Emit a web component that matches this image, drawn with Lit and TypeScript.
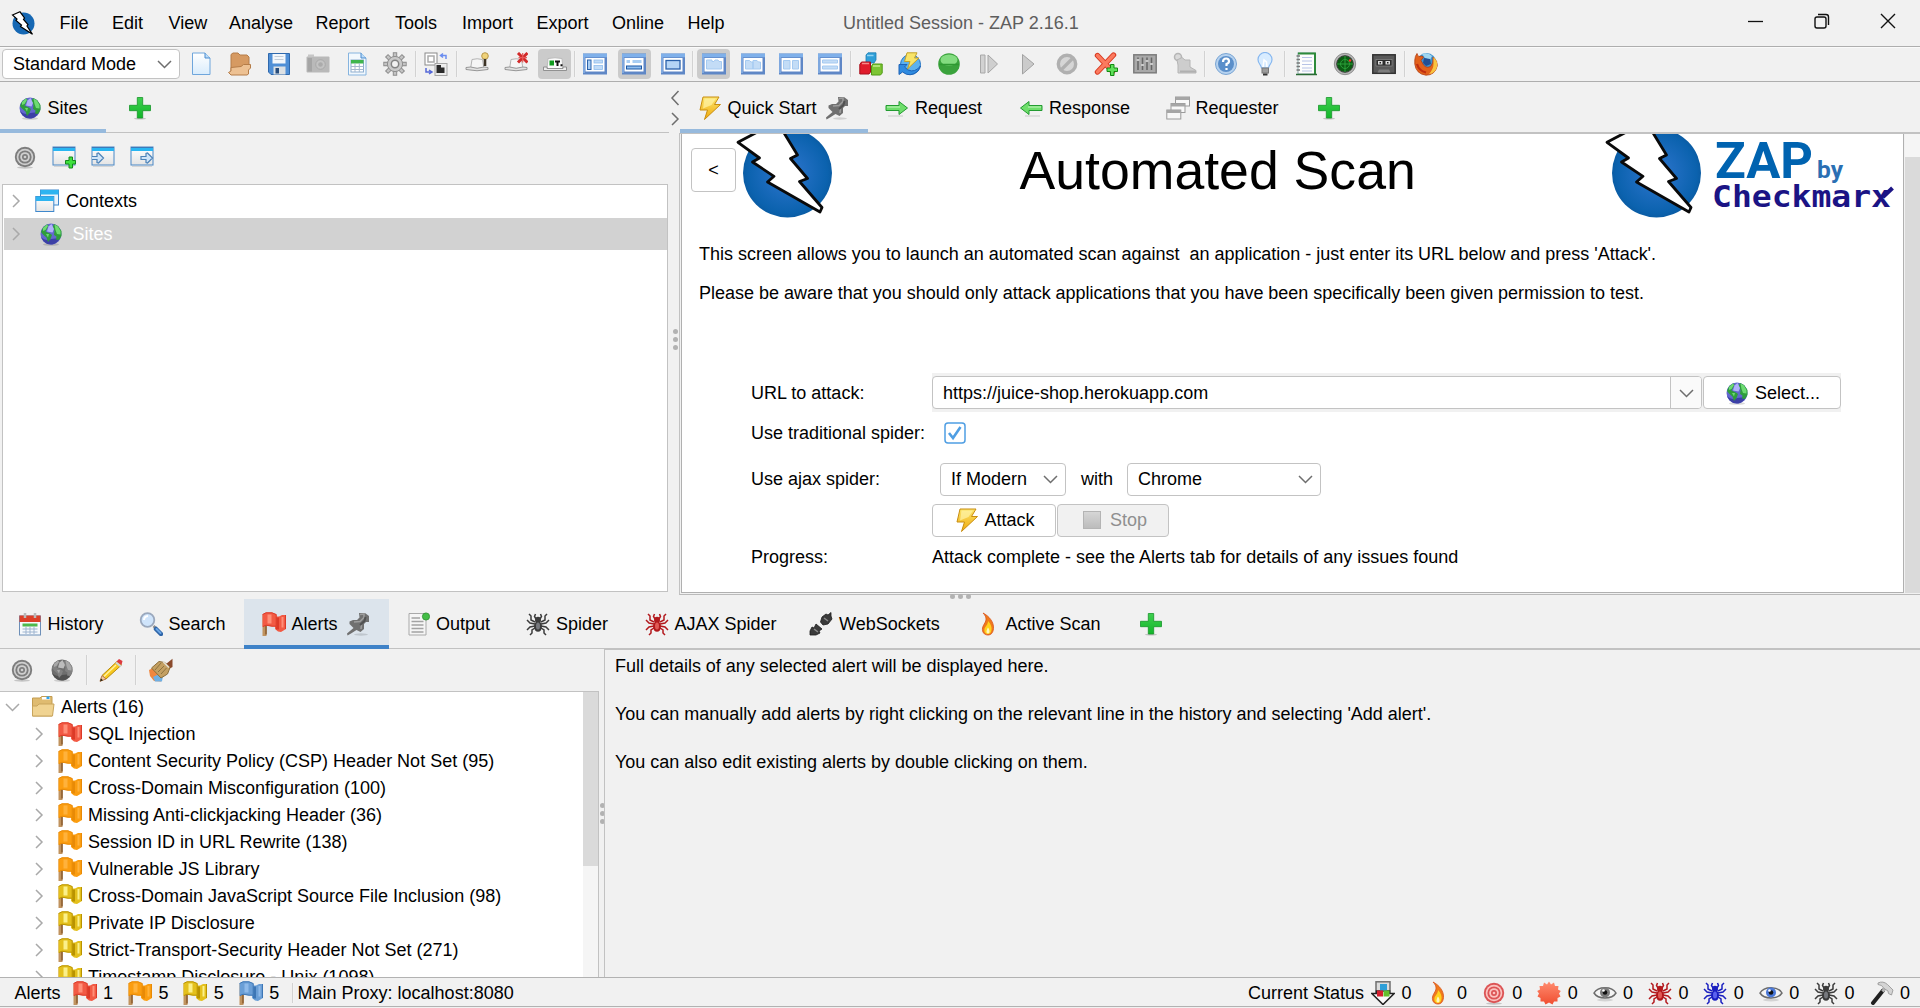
import { LitElement, html, svg, css, nothing } from "lit";
import { customElement } from "lit/decorators.js";
import { classMap } from "lit/directives/class-map.js";
import { styleMap } from "lit/directives/style-map.js";

/* ---------- icon drawings, all on a 24 x 24 grid ---------- */

const spiderIcon = (c: string, body: string) => svg`
  <g fill="none" stroke=${c} stroke-width="1.5">
    <path d="M9 10L5 8V4L3 2M9 12L4 11L1 8M9 14L4 15L1 18M9 16L6 18V21L4 23"/>
    <path d="M15 10L19 8V4L21 2M15 12L20 11L23 8M15 14L20 15L23 18M15 16L18 18V21L20 23"/>
    <path d="M10 7L8.5 4.5L9.5 2M14 7L15.5 4.5L14.500 2"/>
  </g>
  <ellipse cx="12" cy="8" rx="3" ry="3.200" fill=${c}/>
  <ellipse cx="12" cy="14.500" rx="4" ry="5.200" fill=${c}/>
  <ellipse cx="12" cy="14" rx="2" ry="3.500" fill=${body}/>`;

const flagIcon = (edge: string, fill: string, light: string) => svg`
  <path d="M.5 3H4.500V24H.5Z" fill="#c0935f"/><path d="M4 13V22.500" stroke="#8a5a2b" stroke-width="1.500"/>
  <path d="M13 4.500H17L20 3H24V17L21.500 18.500L19 20L16 19.500L13 17Z" fill=${fill}/>
  <path d="M15.500 5.500V17.500" stroke=${edge} stroke-width="3"/><path d="M20.500 5V15.500" stroke=${light} stroke-width="2"/><path d="M23.500 3V17" stroke=${edge}/>
  <path d="M.5 2.500L4 .5H10L14.500 2.500V14.500H10L4 13.500L.5 15Z" fill=${fill}/>
  <path d="M.5 2.500L4 .8H10L14.200 2.500V14.200" fill="none" stroke=${edge}/><path d="M1 14.500L4 13.200L10 14.200H14" fill="none" stroke=${edge}/>
  <path d="M7.500 2.500V11.500" stroke=${light} stroke-width="4"/>`;

const globeIcon = (sea: string, deep: string, land: string, light: string, pale: string) => svg`
  <ellipse cx="12" cy="22.500" rx="8" ry="1.300" fill="#000" opacity=".15"/>
  <circle cx="12" cy="12" r="10.500" fill=${sea}/>
  <path d="M2 15C5 18 9 19 12 17L21 16C19 20 16 22.500 12 22.500C7 22.500 3.500 19 2 15Z" fill=${deep}/>
  <path d="M15 2L19 4L22.500 9V14L20 18L17 17.500L17.500 14.500L15 13L15.500 9L13.500 5Z" fill=${land}/>
  <path d="M15.500 2.500L19 4.500L21.500 9V12.500L18 12L16.500 8Z" fill=${pale}/>
  <path d="M2 10L4 5.500L8 2.500L9.500 3L8 7L6.500 9.500L11 11.500L13 13L11.500 17L9 20L7.500 15.500L4 12.500Z" fill=${land}/>
  <path d="M4 6L8 2.500L9 4L6.500 8L4 9Z" fill=${pale}/>
  <path d="M9.500 4.500L12.500 2L15 7L13.500 10.500L8 9.500Z" fill=${light}/>
  <path d="M7 12L10 12L9 15.500Z" fill=${pale}/>`;

const targetIcon = (c: string, l: string) => svg`
  <ellipse cx="12" cy="22.500" rx="8" ry="1.200" fill="#000" opacity=".18"/>
  <circle cx="12" cy="12" r="10.200" fill=${c}/>
  <circle cx="12" cy="12" r="8.300" fill=${l}/>
  <circle cx="12" cy="12" r="6.600" fill=${c}/>
  <circle cx="12" cy="12" r="4.800" fill=${l}/>
  <circle cx="12" cy="12" r="3" fill=${c}/><circle cx="12" cy="12" r="1.300" fill=${l}/>`;

const eyeIcon = (iris: string) => svg`
  <ellipse cx="12" cy="19" rx="8" ry="1.500" fill="#000" opacity=".12"/>
  <path d="M1 12C5 5 19 5 23 12C19 18.500 5 18.500 1 12Z" fill="#f4f4f4" stroke="#6c6c6c" stroke-width="1.500"/>
  <circle cx="12" cy="11.500" r="5" fill=${iris}/><circle cx="12" cy="11.500" r="2.300" fill="#111"/>
  <circle cx="10.500" cy="9.500" r="1.300" fill="#fff"/>`;

const layoutFrame = svg`<rect x="0" y="1.500" width="24.500" height="21" fill="#5f87c6"/>
  <path d="M0 3.500H24" stroke="#7fb0ea" stroke-width="3.500"/><path d="M1 5V21" stroke="#88b2e6" stroke-width="1.500"/><rect x="2.500" y="6" width="19" height="13.500" fill="#fff"/>`;

const hatBase = svg`<path d="M5.500 17L7 7.500Q12 6 17.500 7.500L19 17Z" fill="#f6f6f6" stroke="#b4b4b4"/>
  <path d="M1 15.500L5.500 15Q12 17.500 19 15L23 15.500V17.500Q12 20 1 17.500Z" fill="#e2e2e2" stroke="#8d8d8d" stroke-width=".9"/>`;

const smallWindow = svg`<rect x="1" y="2" width="22" height="18" fill="url(#paper)" stroke="#4a88c6"/>
  <rect x="1" y="2" width="22" height="4" fill="#29b6f2"/><path d="M1 2.500H23" stroke="#3f79b8"/>
  <path d="M2 21.500H22" stroke="#d5d5d5"/>`;

const icons: Record<string, unknown> = {
  zap: svg`<circle cx="12.500" cy="12.500" r="11" fill="#1668b4"/>
    <path d="M1.500 4L9 .8L13.500 7L12.500 8.500L17 13.500L16 15L21.500 23.300L9.500 15.500L10.500 14L5 9.500L6 8Z" fill="#fff" stroke="#000" stroke-width="1.200"/>`,
  doc: svg`<path d="M3.500 1H16L21 6V22.500H3.500Z" fill="url(#bluePaper)" stroke="#6fa6dc"/><path d="M16 1V6H21" fill="#bcdcf8" stroke="#4b8bce"/>`,
  open: svg`<path d="M3 19V2.500L5 1H10L12 3H19L21 5V15L19 20H4Z" fill="#d69a62" stroke="#b57c48"/>
    <path d="M.5 20.500L3 19V15.500L13 14.500L15.500 12.500H22.500V16L20.500 18V22L19 23H3Z" fill="#edc193" stroke="#b57c48"/>`,
  save: svg`<path d="M1.500 1.500H22.500V22.500H4L1.500 20Z" fill="#4f8fd6" stroke="#2f69ad"/><rect x="5.500" y="2" width="13" height="9.500" fill="#f3f7fb"/>
    <path d="M7.500 4.500H16.500M7.500 7.500H16.500" stroke="#c2cdd8"/><rect x="6.500" y="14.500" width="12" height="8" fill="#dde1e4"/><rect x="8.500" y="16" width="3.500" height="5.500" fill="#274d7d"/>`,
  camera: svg`<rect x="0.500" y="4.500" width="23" height="16" rx="1" fill="#b9b9b9"/><rect x="2" y="2.500" width="6" height="2.500" fill="#c6c6c6"/>
    <rect x="1.500" y="6" width="4.500" height="13.500" fill="#a5a5a5"/><circle cx="14.500" cy="12.500" r="4.800" fill="#c3c3c3" stroke="#a9a9a9"/><circle cx="14.500" cy="12.500" r="2.300" fill="#ababab"/>`,
  report: svg`<path d="M3.500 1H16L21 6V23H3.500Z" fill="#f2f8fd" stroke="#86b4df"/><path d="M16 1V6H21" fill="#bcdcf8" stroke="#4b8bce"/>
    <rect x="6" y="8" width="12.500" height="12" fill="#fff" stroke="#8eaed0"/><rect x="6" y="8" width="12.500" height="3.500" fill="#3fb54d"/>
    <path d="M6 14.500H18.500M6 17.500H18.500M10 11V20M14.300 11V20" stroke="#a6b9cf"/>`,
  gear: svg`<g stroke="#8b8b8b" stroke-width="4.400"><path d="M12 .3V23.700M.3 12H23.700M3.500 3.500L20.500 20.500M20.500 3.500L3.500 20.500"/></g>
    <g stroke="#c4c4c4" stroke-width="2.600"><path d="M12 1.200V22.800M1.200 12H22.800M4.200 4.200L19.800 19.800M19.800 4.200L4.200 19.800"/></g>
    <circle cx="12" cy="12" r="7.600" fill="#c9c9c9" stroke="#8f8f8f"/><circle cx="12" cy="12" r="3.700" fill="#f1f1f1" stroke="#838383" stroke-width="1.500"/>`,
  swap: svg`<rect x="1" y="1" width="12" height="12" fill="#fff" stroke="#8a8a8a"/><rect x="4" y="4" width="6" height="6" fill="none" stroke="#aaa" stroke-width="1.500"/>
    <rect x="11" y="11.500" width="12" height="12" fill="#ececec" stroke="#a5a5a5"/><path d="M12.500 13H17V15.500H20.500V21H12.500Z" fill="#2a2a2a"/>
    <path d="M22 7V3.500H17.500M19 1.500L16.500 3.500L19 5.500" fill="none" stroke="#6b8df0" stroke-width="1.500"/>
    <path d="M2 16V20H7M5 18L8 20L5 22" fill="none" stroke="#5568d8" stroke-width="1.500"/>`,
  hatKey: svg`${hatBase}<circle cx="20" cy="4" r="3.300" fill="#efd27a" stroke="#b8974a"/><path d="M20 7V14" stroke="#3c3325" stroke-width="2.600"/>`,
  hatX: svg`${hatBase}<path d="M14 1L23.500 10.500M23.500 1L14 10.500" stroke="#d22a2a" stroke-width="3"/><path d="M18.700 1V10.500M14.500 5.700H23" stroke="#e65a5a" stroke-width="1.200"/>`,
  hatOn: svg`<path d="M4 17L5 6.500Q12 5 19 6.500L20 17Z" fill="#fafafa" stroke="#bbb"/>
    <path d="M.5 15H4V16.500H20V15H23.500V18.500H.5Z" fill="#eee" stroke="#888" stroke-width=".9"/>
    <rect x="6.500" y="8.500" width="4.500" height="5" fill="#0e9a1d"/><path d="M12 9.500H17M14.500 10V14M17.500 13.300H19.500" stroke="#111" stroke-width="2"/>`,
  lay1: svg`${layoutFrame}<rect x="4.500" y="8" width="3.500" height="9.500" fill="#a8cdf3" stroke="#2b62ab"/><rect x="11" y="8" width="8.500" height="3" fill="#c0dbf7" stroke="#8fbcec" stroke-width=".8"/><rect x="11" y="13.500" width="8.500" height="4" fill="#c0dbf7" stroke="#8fbcec" stroke-width=".8"/>`,
  lay2: svg`${layoutFrame}<rect x="4.500" y="8" width="3.500" height="3" fill="#a8cdf3"/><rect x="10.500" y="8" width="9" height="3" fill="#a8cdf3"/><rect x="4.500" y="14" width="15" height="3" fill="#8fbdee" stroke="#1d58a5"/>`,
  lay3: svg`${layoutFrame}<rect x="5" y="8.500" width="14" height="8.500" fill="#b5d5f6" stroke="#2b62ab" stroke-width="1.300"/>`,
  lay4: svg`${layoutFrame}<path d="M4.500 17V8H10V9.500H12L13 8H16L17 9.500H19.500V17Z" fill="#c3dcf6" stroke="#a5caf1"/>`,
  lay5: svg`${layoutFrame}<path d="M4.500 17V8.500H8.500L10 10H12V17ZM12 17V8.500H16L17.500 10H19.500V17Z" fill="#c3dcf6" stroke="#a5caf1"/>`,
  lay6: svg`${layoutFrame}<path d="M4.500 8.500H11V17H4.500ZM13.500 8.500H19.500V17H13.500Z" fill="#c3dcf6" stroke="#a5caf1"/>`,
  lay7: svg`${layoutFrame}<path d="M4.500 8H19.500V11H4.500ZM4.500 14H19.500V17H4.500Z" fill="#c3dcf6" stroke="#a5caf1"/>`,
  cubes: svg`<path d="M7 3L9 .8H17V8L15 11H7Z" fill="#2e9fd8" stroke="#1f7fb4" stroke-width=".8"/><path d="M8 3.500H14.500" stroke="#8fd2f2" stroke-width="1.500"/>
    <path d="M.8 12.500L2.500 10H11.500V20L10 22H.8Z" fill="#e01c2c" stroke="#a80f1c"/><path d="M3 11.500H10" stroke="#f78a8a" stroke-width="1.500"/>
    <path d="M12.500 14L14 12H23.200V21L21.500 23H12.500Z" fill="#7cc433" stroke="#4f9a14"/><path d="M14 14H21" stroke="#c3ec8d" stroke-width="1.500"/>`,
  boltRefresh: svg`<circle cx="12.500" cy="12.500" r="10" fill="#5db2ee" stroke="#2373c4"/><path d="M1 12.500V22.500L4.500 20Q12 26 20 19L22.500 14Q17 21 10 18L6.500 15L9 12.500Z" fill="#2f8be0" stroke="#1e63b6"/>
    <path d="M9 .8H19L16.500 6H21L9.500 17L12 9.500H6.500Z" fill="#f8e468" stroke="#c4a12a"/>`,
  greenBall: svg`<circle cx="12" cy="12" r="10.800" fill="#3aa23c"/><ellipse cx="12" cy="8" rx="8.500" ry="5.500" fill="#83dc80"/><path d="M2 12.500H22" stroke="#2e9831" stroke-width="1.500"/>`,
  step: svg`<path d="M3.500 3H8V21H3.500Z" fill="#d2d2d2" stroke="#a8a8a8"/><path d="M11 3L20.500 12L11 21Z" fill="#cfcfcf" stroke="#a5a5a5"/>`,
  play: svg`<path d="M6.500 2.500L18 12L6.500 22Z" fill="#cbcbcb" stroke="#a2a2a2"/>`,
  ban: svg`<circle cx="12" cy="12" r="8.700" fill="#d6d6d6" stroke="#b0b0b0" stroke-width="3.400"/><path d="M6.500 17.500L17.500 6.500" stroke="#b0b0b0" stroke-width="3.200"/>`,
  xPlus: svg`<path d="M3.500 3.500L18.500 19.500M19.500 3L3.500 20" stroke="#d8371e" stroke-width="5.400" stroke-linecap="round"/><path d="M3.500 3.500L18.500 19.500M19.500 3L3.500 20" stroke="#fb7a5f" stroke-width="3.400" stroke-linecap="round"/>
    <path d="M16.500 12.500H20V16H23.500V19.500H20V23.500H16.500V19.500H13V16H16.500Z" fill="#5fe05a" stroke="#128a12"/>`,
  mixer: svg`<rect x=".8" y="2.800" width="22.400" height="18" fill="#a9a9a9" stroke="#7d7d7d" stroke-width="1.500"/><path d="M5 5.500V18M9.500 5.500V18M14 5.500V18M18.500 5.500V18" stroke="#666" stroke-width="1.500"/>
    <path d="M3.500 8H6.500M8 13H11M12.500 9H15.500M17 12H20" stroke="#c9c9c9" stroke-width="2"/>`,
  server: svg`<circle cx="5" cy="5" r="3.500" fill="#dadada" stroke="#b5b5b5" stroke-width="1.500"/><path d="M4 8L9 5.500L12 8H17V15L23 18.500V21H5V13Z" fill="#cdcdcd" stroke="#b5b5b5"/><path d="M7 19.500H23" stroke="#b0b0b0" stroke-width="2"/>`,
  help: svg`<circle cx="12" cy="12" r="10.500" fill="#b6d2ef" stroke="#79a5d4"/><circle cx="12" cy="12" r="8" fill="#5b8fca"/><path d="M9 10Q9 6.500 12.200 6.500Q15 6.500 15 9.200Q15 11 12.500 12V14M12.500 16V18" fill="none" stroke="#fff" stroke-width="2.200"/>`,
  bulb: svg`<path d="M8.500 16C8 12.500 5 11.500 5 7.500A7 7 0 0 1 19 7.500C19 11.500 16 12.500 15.500 16Z" fill="#d8ecff" stroke="#86b7ef" stroke-width="1.200"/><path d="M10 15L11 8L13.500 10L14 15" fill="none" stroke="#fff" stroke-width="1.500"/>
    <rect x="9" y="16" width="6.500" height="5" fill="#9c9c9c" stroke="#777"/><path d="M10 22.500H14.500" stroke="#333" stroke-width="2"/>`,
  notebook: svg`<rect x="4" y="1" width="17" height="21" fill="#fdfdfd" stroke="#8aa"/><path d="M4 1.500H21V22" fill="none" stroke="#2e8b3b" stroke-width="2"/><path d="M8 5.500H18M8 9H18M8 12.500H18M8 16H18M8 19H18" stroke="#b7c3e6"/>
    <path d="M2.500 4H6M2.500 7.500H6M2.500 11H6M2.500 14.500H6M2.500 18H6" stroke="#777" stroke-width="1.400"/><path d="M2 22.500H23" stroke="#2a6b35" stroke-width="1.500"/>`,
  radar: svg`<circle cx="12" cy="12" r="10.700" fill="#b6b6b6" stroke="#8e8e8e"/><circle cx="12" cy="12" r="8.300" fill="#0c5c14" stroke="#3b3b3b"/><path d="M12 4V20M4 12H20" stroke="#2aa038"/><circle cx="12" cy="12" r="4.500" fill="none" stroke="#2aa038"/><circle cx="17" cy="8.500" r="1.200" fill="#f33"/>`,
  tape: svg`<rect x=".8" y="2.800" width="22.400" height="18.500" fill="#5a5a5a" stroke="#333" stroke-width="1.500"/><rect x="4" y="7.500" width="16" height="6.500" fill="#2c2c2c" stroke="#8a8a8a" stroke-width=".7"/><rect x="6" y="9" width="4.500" height="3.500" fill="#dcdcdc"/><rect x="13.500" y="9" width="4.500" height="3.500" fill="#dcdcdc"/><path d="M7.500 10.700H9M15 10.700H16.500" stroke="#222" stroke-width="1.500"/><path d="M5.500 20.500L7 17.500H17L18.500 20.500" fill="#7d7d7d"/>`,
  firefox: svg`<circle cx="12.500" cy="11" r="10" fill="#3f92cf"/><path d="M8 2Q14 0 18 4L16 8L11 6Z" fill="#9fd6f0"/><path d="M10 6L16 7L17 12L12 14L9 11Z" fill="#234f93"/>
    <path d="M.8 8Q1 4 3 1.500Q3.500 4 5 4.500Q8 3.500 9.500 5L7 8.500L9.500 13Q13 17 17 14Q19.500 11 19 5Q24 9 23.200 14Q21 23.200 12 23.200Q2 22 .8 12Z" fill="#e2611b" stroke="#b33c10" stroke-width=".8"/>
    <path d="M19.500 5Q24 9 23 15Q21 21.500 15 22Q19.500 17 19.500 12Z" fill="#f9c440"/><path d="M3 12Q5 19 12 20.500" fill="none" stroke="#c02e10" stroke-width="2.200"/>`,
  globe: globeIcon("#6368cf", "#3c40a6", "#2f9d3c", "#b0b2fa", "#6edb72"),
  globeGrey: globeIcon("#6e6e6e", "#505050", "#818181", "#bcbcbc", "#a8a8a8"),
  plus: svg`<ellipse cx="12" cy="22.600" rx="6" ry="1" fill="#000" opacity=".2"/>
    <path d="M9.300 1.500H14.700V9.300H22.500V14.700H14.700V22H9.300V14.700H1.500V9.300H9.300Z" fill="url(#green)" stroke="#17952a" stroke-width=".8"/>`,
  bolt: svg`<path d="M5 1H21L16.500 8.500H22.500L6.500 23.500L9.500 14H2Z" fill="url(#gold)" stroke="#c88d10" stroke-linejoin="round"/>
    <path d="M6.500 2.500H18L13.500 9L5 12.500Z" fill="#fff3a8" opacity=".7"/>`,
  pin: svg`<ellipse cx="15" cy="22.500" rx="7" ry="1.200" fill="#000" opacity=".13"/>
    <path d="M13 1H19L23 4V10H20L18 12V17L14.500 20L10.500 18L5 21.500L1.500 23.500L1 21.500L7.500 16L3.500 12V9.500L7 8H11L13.500 5.500Z" fill="#707070"/>
    <path d="M14 2.500L18 2V5.500L14 9.500L8 10M15.500 12.500L15 17" fill="none" stroke="#9c9c9c" stroke-width="1.600"/><path d="M19.500 5L18.500 9L14 13" fill="none" stroke="#515151" stroke-width="2"/>`,
  arrowR: svg`<path d="M1 9.500H14V5.500L22.500 12L14 18.500V14.500H1Z" fill="#6ede6b" stroke="#239b31"/><path d="M2 11H15" stroke="#c2f5bd"/><path d="M3 20H18" stroke="#000" opacity=".08" stroke-width="2"/>`,
  arrowL: svg`<path d="M23 9.500H10V5.500L1.500 12L10 18.500V14.500H23Z" fill="#6ede6b" stroke="#239b31"/><path d="M9 11H22" stroke="#c2f5bd"/><path d="M6 20H21" stroke="#000" opacity=".08" stroke-width="2"/>`,
  requester: svg`<g fill="#f8f8f8" stroke="#9b9b9b"><rect x="9.500" y="1" width="14" height="9"/><rect x="5" y="7.500" width="14" height="9"/><rect x=".8" y="14" width="14" height="9"/></g>
    <path d="M9.500 2.500H23.500M5 9H19M.8 15.500H14.800" stroke="#a6a6a6" stroke-width="3"/>`,
  winPlus: svg`${smallWindow}<path d="M17 12H20.500V15.500H23.500V19H20.500V23H17V19H13.500V15.500H17Z" fill="#3fe03e" stroke="#15891c"/>`,
  winIn: svg`${smallWindow}<path d="M1 11.500H6V8.500L7.500 8L12.500 13L7.500 18L6 17.500V14.500H1" fill="#cfe4f8" stroke="#4c82b8" stroke-width="1.200"/>`,
  winOut: svg`${smallWindow}<path d="M11 11.500H16V8.500L17.500 8L22.500 13L17.500 18L16 17.500V14.500H11Z" fill="#cfe4f8" stroke="#4c82b8" stroke-width="1.200"/>`,
  contexts: svg`<rect x="5.500" y="1" width="18" height="15" fill="#eaf3fb" stroke="#3f88cc"/><rect x="5.500" y="1" width="18" height="4.500" fill="#2eb4f0"/>
    <rect x=".8" y="7.500" width="18" height="15" fill="url(#paper)" stroke="#3f88cc"/><rect x=".8" y="7.500" width="18" height="4.500" fill="#2eb4f0"/>`,
  calendar: svg`<rect x="1.500" y="4" width="21" height="19" fill="#f6f9fc" stroke="#6d8fb8"/><rect x="1.500" y="3.500" width="21" height="6.500" fill="#dc3f28"/><path d="M7 1V6M17 1V6" stroke="#b9b9b9" stroke-width="2.500"/>
    <rect x="4.500" y="11.500" width="15" height="3" fill="#4fb94c"/><path d="M4.500 17H19.500M4.500 20H19.500M8 14.500V22M12 14.500V22M16 14.500V22" stroke="#9eb4cf"/>`,
  search: svg`<path d="M14.500 14L17 16.500" stroke="#8c8c8c" stroke-width="2.500"/><path d="M17 17L22 22" stroke="#2e65a8" stroke-width="4.500" stroke-linecap="round"/><path d="M17.500 17L21.500 21" stroke="#6aa5e4" stroke-width="2" stroke-linecap="round"/>
    <circle cx="8.500" cy="8" r="6.800" fill="#cfe4fb" stroke="#9aa8bd" stroke-width="1.800"/><path d="M5 8Q5 4.500 9 4" fill="none" stroke="#fff" stroke-width="2"/>`,
  output: svg`<path d="M3 1.500H20V23H3Z" fill="#f5f5f5" stroke="#a9a9a9"/><path d="M5.500 6H14M5.500 9.500H17.500M5.500 13H17.500M5.500 16.500H17.500M5.500 20H17.500" stroke="#a3a3a3" stroke-width="1.500"/><circle cx="20" cy="4.500" r="3.600" fill="#43bd46" stroke="#2b8f2f" stroke-width=".8"/>`,
  spider: spiderIcon("#3c3c3c", "#77797e"),
  spiderRed: spiderIcon("#b3191d", "#e05a56"),
  spiderBlue: spiderIcon("#1a1fc0", "#5b62ef"),
  plug: svg`<path d="M13 5L17 2L19 3L22 .5V4L23 7L19 12L14 13L11.500 10Z" fill="#3a3a3a" stroke="#1d1d1d" stroke-width=".8"/><path d="M15 6L19 9" stroke="#8b8b8b" stroke-width="1.500"/>
    <path d="M1 23V19L3 15L5 16L7 12L13 17L10 19L11 21L7 23Z" fill="#3a3a3a" stroke="#1d1d1d" stroke-width=".8"/><path d="M5 17L9 20" stroke="#8b8b8b" stroke-width="1.500"/>`,
  flame: svg`<path d="M7 1C13 4 18 10 17.500 16.500C17 21 15 23 12 23C8 23 6 20 6.500 16C7 13 9.500 11 10 8C10.300 5 9 3 7 1Z" fill="#f07a1c" stroke="#d9531b" stroke-width=".8"/>
    <path d="M12 9C15 12 16 15.500 15.500 18C15 21 13.500 22 12 22C9 22 8 19.500 8.500 17C9 14.500 12 13 12 9Z" fill="#ffd21f"/>
    <path d="M12 15.500C14 18 14 21.500 12 21.500C10 21.500 10 18.500 12 15.500Z" fill="#fff6c0"/>`,
  pencil: svg`<path d="M18 3.500L22.500 7L7 21L3 17.500Z" fill="#f7c81e" stroke="#b98a0e"/><path d="M17 7L5 18.500" stroke="#fff1a0" stroke-width="1.500"/><path d="M3 17.500L7 21L1 23.300Z" fill="#f1c9a0" stroke="#b87848"/><path d="M1 23.500L2 20.500L4 22.200Z" fill="#221"/>
    <path d="M17.500 3.500L20 1L23.500 3L22.500 7Z" fill="#dd3a3f"/><path d="M17 4.500L22 8.500" stroke="#cfd3d8" stroke-width="2"/>`,
  broom: svg`<path d="M0 12L4 10L12 16L12 23.500L5 23L1 18Z" fill="#f0873f"/><path d="M4 19L8 17L14 18L13 23.500H6Z" fill="#6fb0e4"/><path d="M17 6L23.500 .8V9L20 11Z" fill="#8a4a2c"/>
    <path d="M2.500 10L10 3.500L16 4.500L21 9.500L18.500 16L12 20Z" fill="#c4a062" stroke="#8d6f3a"/><path d="M6 12L12 5M9 14L15 8M12 16L17.500 10" stroke="#8d7340"/><path d="M14 3.500L20 9.500" stroke="#e5e1d5" stroke-width="1.500"/>`,
  folder: svg`<path d="M1.500 21V3H9L10.500 1.500H21V21Z" fill="#dfbb70" stroke="#c39c50"/><rect x="11" y="2" width="8" height="2.500" fill="#fff"/><rect x="15.500" y="1.500" width="3" height="2.500" fill="#2ea3f0"/>
    <path d="M1.500 21V11H6L8 9H23L21.500 21Z" fill="#f0d391" stroke="#c9a55c"/>`,
  flagRed: flagIcon("#dc3a28", "#f25a44", "#ff8f78"),
  flagOrange: flagIcon("#e88a06", "#fb9d10", "#ffb23c"),
  flagYellow: flagIcon("#b99300", "#e4c01c", "#fbf08a"),
  flagBlue: flagIcon("#3d76b5", "#6a9ed6", "#8fbaea"),
  scanDown: svg`<rect x="5" y=".8" width="14" height="14" fill="#dcdcdc" stroke="#6f6f6f" stroke-width="1.500"/><path d="M.8 12.500H5.500V10H18.500V12.500H23.200L12 23.500Z" fill="#fafafa" stroke="#222" stroke-width="1.600"/>
    <rect x="9" y="3" width="7" height="6.500" fill="#2e9fd8"/><rect x="6" y="9.500" width="6" height="6" fill="#d4202f"/><rect x="12.500" y="9.500" width="6" height="6" fill="#64be2c"/>`,
  target: targetIcon("#7d7d7d", "#cfcfcf"),
  targetRed: targetIcon("#dc5455", "#fbc3c0"),
  burst: svg`<path d="M12 .5L14 3.500L17 1.500L18 5L21.500 5L21 8.500L23.800 10L22 12.500L23.500 15.500L20.500 17L20.500 20.500L17 20.500L15.500 23.500L12 21.500L8.500 23.500L7 20.500L3.500 20.500L3.500 17L.5 15.500L2 12.500L.2 10L3 8.500L2.500 5L6 5L7 1.500L10 3.500Z" fill="url(#coral)"/>`,
  eye: eyeIcon("#7c7c7c"),
  eyeBlue: eyeIcon("#4a78d8"),
  hammer: svg`<path d="M13 9.500L3 22" stroke="#202020" stroke-width="4" stroke-linecap="round"/><path d="M16 6L12.500 10.500" stroke="#b4b4b4" stroke-width="3"/><path d="M8 2Q13 -.5 17.500 3.500L23 9L21.500 14L18.500 12.500L18 10L14 7.500Q12 3.500 8 3.500Z" fill="#d4d4d4" stroke="#999" stroke-width=".9"/>`,
};

const icon = (name: string) =>
  html`<svg class="ico" width="24" height="24" viewBox="0 0 24 24" aria-hidden="true">${icons[name]}</svg>`;

const chevron = (dir: "right" | "down" | "left", color = "#6e6e6e") => {
  const d = { right: "M4 2L10 8L4 14", left: "M10.500 1L4 8L10.500 15", down: "M1 5L7.500 11.500L14 5" }[dir];
  return html`<svg class="chev" width="15" height="16" viewBox="0 0 15 16"><path d=${d} fill="none" stroke=${color} stroke-width="1.500"/></svg>`;
};

/* The round badge with the lightning bolt; its top is cut by the panel edge. */
const badge = html`<svg class="badge" width="98" height="86" viewBox="736 134 98 86">
  <circle cx="787.500" cy="173" r="44.500" fill="url(#badgeBlue)"/>
  <path d="M738 142.300L765 128H781L797.500 155L790.500 158.500L807.500 178.500L799.500 181.500L822 207.500L820 212L767.500 182L774 176.300L752.500 162L759.500 158Z"
    fill="#fff" stroke="#0a0a0a" stroke-width="2.800" stroke-linejoin="round"/>
</svg>`;

/* ---------- data ---------- */

const menus: [string, number][] = [
  ["File", 52.5], ["Edit", 56.5], ["View", 60.5], ["Analyse", 86.5], ["Report", 79.5],
  ["Tools", 67], ["Import", 74.5], ["Export", 75.5], ["Online", 75.5], ["Help", 60],
];

type Tool = string | { on: string };
const toolsA: Tool[] = ["doc", "open", "save", "camera", "report", "gear", "|", "swap", "|", "hatKey", "hatX", { on: "hatOn" }, "|",
  "lay1", { on: "lay2" }, "lay3", "|", { on: "lay4" }, "lay5", "lay6", "lay7", "|"];
const toolsB: Tool[] = ["cubes", "boltRefresh", "greenBall", "step", "play", "ban", "xPlus", "mixer", "server", "|",
  "help", "bulb", "|", "notebook", "radar", "tape", "|", "firefox"];

interface Tab { icon: string; label?: string; width: number; pin?: boolean; state?: "dim" | "active" }
const siteTabs: Tab[] = [
  { icon: "globe", label: "Sites", width: 106, state: "dim" }, { icon: "plus", width: 60 },
];
const workTabs: Tab[] = [
  { icon: "bolt", label: "Quick Start", width: 187.5, pin: true, state: "dim" },
  { icon: "arrowR", label: "Request", width: 134 },
  { icon: "arrowL", label: "Response", width: 146.5 },
  { icon: "requester", label: "Requester", width: 151 },
  { icon: "plus", width: 60 },
];
const infoTabs: Tab[] = [
  { icon: "calendar", label: "History", width: 121 },
  { icon: "search", label: "Search", width: 123 },
  { icon: "flagRed", label: "Alerts", width: 144.5, pin: true, state: "active" },
  { icon: "output", label: "Output", width: 120 },
  { icon: "spider", label: "Spider", width: 118.5 },
  { icon: "spiderRed", label: "AJAX Spider", width: 164.5 },
  { icon: "plug", label: "WebSockets", width: 166.5 },
  { icon: "flame", label: "Active Scan", width: 163.5 },
  { icon: "plus", width: 60 },
];

const alerts: [string, string][] = [
  ["flagRed", "SQL Injection"],
  ["flagOrange", "Content Security Policy (CSP) Header Not Set (95)"],
  ["flagOrange", "Cross-Domain Misconfiguration (100)"],
  ["flagOrange", "Missing Anti-clickjacking Header (36)"],
  ["flagOrange", "Session ID in URL Rewrite (138)"],
  ["flagOrange", "Vulnerable JS Library"],
  ["flagYellow", "Cross-Domain JavaScript Source File Inclusion (98)"],
  ["flagYellow", "Private IP Disclosure"],
  ["flagYellow", "Strict-Transport-Security Header Not Set (271)"],
  ["flagYellow", "Timestamp Disclosure - Unix (1098)"],
];

const alertCounts: [string, number][] = [["flagRed", 1], ["flagOrange", 5], ["flagYellow", 5], ["flagBlue", 5]];
const scanCounts = ["scanDown", "flame", "targetRed", "burst", "eye", "spiderRed", "spiderBlue", "eyeBlue", "spider", "hammer"];

@customElement("app-root")
export class AppRoot extends LitElement {
  static styles = css`
    :host { display: block; width: 1920px; height: 1008px; overflow: hidden; background: #f1f1f1; color: #000;
      font: 18px/24px "Liberation Sans", Arial, sans-serif; }
    * { box-sizing: border-box; }
    .app { display: flex; flex-direction: column; height: 1008px; white-space: nowrap; }
    .app > * { flex: none; }
    .ico, .chev { display: block; flex: none; }
    .defs { position: absolute; width: 0; height: 0; }

    .menubar { display: flex; align-items: center; height: 47px; padding-left: 11px; border-bottom: 1px solid #aeaeae; }
    .menus { display: flex; margin-left: 24.500px; width: 783.500px; }
    .title { flex: 1; color: #5e5e5e; }
    .winbtns { display: flex; gap: 48px; padding: 0 23.500px 4px 0; }

    .toolbar { display: flex; align-items: center; height: 35px; padding-left: 2px; border-bottom: 1px solid #aeaeae; box-shadow: inset 0 1px #fafafa; }
    .combo { display: flex; align-items: center; justify-content: space-between; background: #fff; border: 1px solid #c3c3c3; border-radius: 4px; padding: 0 7.500px 0 10px; }
    .mode { width: 178px; height: 30px; margin-right: 2px; }
    .tool { display: flex; justify-content: center; align-items: center; height: 35px; width: 38.8px; }
    .toolsB .tool { width: 39.180px; }
    .toolface { display: flex; justify-content: center; align-items: center; width: 33px; height: 30px; border-radius: 4px; }
    .toolface.on { background: #cbcbcb; }
    .tools, .toolsB { display: flex; align-items: center; }
    .sep { width: 2px; height: 26px; background: #d2d2d2; border-right: 1px solid #f4f4f4; }

    .upper { display: flex; height: 513px; }
    .sites { width: 669px; display: flex; flex-direction: column; }
    .tabs { display: flex; flex: none; height: 51px; border-bottom: 1px solid #c2c2c2; }
    .tab { display: flex; align-items: center; flex: none; padding-left: 17.500px; gap: 6px; height: 51px; border-bottom: 4px solid transparent; padding-top: 4px; }
    .tab.dim { border-bottom-color: #97badd; }
    .tab.active { background: #dce4ec; border-bottom-color: #3e82c8; }
    .sitetabs .tab:last-child { margin-left: 4px; }
    .pin { margin-left: 2px; }
    .sitesbar { display: flex; align-items: center; gap: 15px; height: 51px; padding: 0 0 3px 13px; }
    .sitetree { width: 666px; height: 408px; margin-left: 2px; border: 1px solid #c2c2c2; background: #fff; padding-left: 1px; }
    .siterow { display: flex; align-items: center; height: 32.500px; padding-left: 5px; }
    .siterow .ico { margin: 0 7px 0 11px; }
    .siterow.sel { background: #d2d2d2; color: #fff; }
    .siterow.sel .ico { margin: 0 10px 0 14.500px; }

    .split { width: 11px; display: flex; flex-direction: column; align-items: center; padding: 8px 0 0 1px; gap: 5px; }
    .dots { display: flex; gap: 3px; }
    .dots i { width: 5px; height: 5px; border-radius: 50%; background: #b2b2b2; }
    .dots.v { flex-direction: column; }
    .split .dots { margin-top: 197px; }

    .work { flex: 1; min-width: 0; display: flex; flex-direction: column; }
    .workframe { flex: 1; min-height: 0; display: flex; margin-left: -1px; border-left: 1px solid #c2c2c2; border-bottom: 1px solid #bababa; padding: 0 0 1px 1px; border-top: 1px solid #c2c2c2; }
    .panel { width: 1223px; border: 1px solid #b0b0b0; border-top: 0; background: #fff; overflow: hidden; }
    .wscroll { width: 15px; margin-left: 1px; background: #dadada; border-top: 23px solid #f5f5f5; }

    .head { display: flex; height: 86px; padding-left: 9px; }
    .back { display: flex; justify-content: center; align-items: center; width: 45px; height: 44px; margin-top: 14px; border: 1px solid #c3c3c3; border-radius: 4px; }
    .badge { display: block; flex: none; }
    h1 { margin: -1px 188px 0 185.500px; font-size: 53.600px; line-height: 74px; font-weight: 400; width: 397px; flex: none; }
    .brand { display: flex; }
    .wordmark { display: block; margin-left: 9.500px; }
    .intro { margin: 0; padding: 22px 0 0 17px; line-height: 24px; white-space: pre; letter-spacing: -.014px; }
    .intro p { margin: 0 0 15px; }

    .form { display: grid; grid-template-columns: 181px 1fr; padding: 53px 61px 0 69px; grid-template-rows: 39px 42px 50px 32px 42px; align-items: center; }
    .urlrow { display: flex; align-items: center; height: 39px; width: 909px; background: #f1f1f1; }
    .url { flex: 1; height: 33px; padding: 0 0 0 10px; }
    .urldrop { width: 31px; height: 31px; display: flex; align-items: center; justify-content: center; border-left: 1px solid #c3c3c3; background: #fafafa; border-radius: 0 3px 3px 0; }
    .btn { display: flex; align-items: center; height: 33px; background: #fff; border: 1px solid #c3c3c3; border-radius: 4px; }
    .select { width: 138px; margin-left: 1px; padding-left: 21px; gap: 6px; }
    .check { display: block; margin-left: 12px; }
    .ajax { display: flex; align-items: center; padding-left: 8px; }
    .ajax .combo { height: 33px; }
    .with { margin: 0 14px 0 15px; }
    .if { width: 126px; } .browser { width: 194px; }
    .actions { display: flex; gap: 1px; }
    .attack { width: 124px; padding-left: 22px; gap: 5.500px; }
    .stop { width: 112px; padding-left: 25px; gap: 9px; background: #f1f1f1; color: #8f8f8f; }
    .square { width: 18px; height: 18px; background: linear-gradient(#d6d6d6, #bcbcbc); border: 1px solid #b4b4b4; }

    .hsplit { height: 4px; display: flex; justify-content: center; margin-top: -1px; margin-bottom: 1px; }
    .infotabs { height: 50px; }
    .infotabs .tab { height: 50px; padding-top: 3px; }
    .info { display: flex; height: 328px; }
    .alertside { width: 600px; display: flex; flex-direction: column; }
    .alertbar { display: flex; align-items: center; height: 42px; padding-left: 10px; }
    .alertbar .sep { height: 30px; margin: 0 11.500px 0 12px; }
    .alertbar .ico + .ico { margin-left: 15.500px; }
    .alerttree { width: 599px; height: 286px; display: flex; border: 1px solid #c2c2c2; border-left: 0; border-bottom: 0; background: #fff; overflow: hidden; }
    .rows { flex: 1; padding-top: 1px; }
    .row { display: flex; align-items: center; height: 27px; padding-left: 32px; }
    .row.top { padding-left: 5px; }
    .row .ico { margin: 0 6px 0 11px; }
    .row.top .ico { margin: 0 6.500px 0 10.500px; }
    .ascroll { width: 15px; background: #f5f5f5; }
    .thumb { height: 174px; background: #dadada; }
    .vsplit { width: 4px; display: flex; align-items: flex-start; justify-content: center; padding-top: 154px; }
    .details { flex: 1; border: 1px solid #c2c2c2; border-width: 1px 0 0 1px; padding: 4px 0 0 10px; letter-spacing: -.014px; }
    .details p { margin: 0 0 24px; }

    .status { display: flex; align-items: center; height: 30px; border: 1px solid #b2b2b2; border-width: 1px 0; padding: 1px 11.500px 0 14.500px; }
    .count { display: flex; align-items: center; gap: 6.500px; width: 55.400px; flex: none; }
    .status .sep { height: 20px; margin: 0 4px 0 -2.500px; }
    .now { margin-left: auto; margin-right: 7px; }
    .last { width: 39px; }
    .alabel { width: 58px; }
  `;

  private tabStrip(tabs: Tab[], extra = "") {
    return html`<div class="tabs ${extra}">${tabs.map((t) => html`
      <div class=${classMap({ tab: true, dim: t.state === "dim", active: t.state === "active" })} style=${styleMap({ width: `${t.width}px` })}>${icon(t.icon)}${t.label ? html`<span>${t.label}</span>` : nothing}${t.pin ? html`<span class="pin">${icon("pin")}</span>` : nothing}</div>`)}</div>`;
  }

  private toolItem(t: Tool) {
    if (t === "|") return html`<div class="sep"></div>`;
    const on = typeof t !== "string";
    return html`<div class="tool"><div class=${classMap({ toolface: true, on })}>${icon(typeof t === "string" ? t : t.on)}</div></div>`;
  }

  private gradients() {
    const g = (id: string, a: string, b: string) =>
      svg`<linearGradient id=${id} x1="0" y1="0" x2="0" y2="1"><stop offset="0" stop-color=${a}/><stop offset="1" stop-color=${b}/></linearGradient>`;
    return html`<svg class="defs"><defs>
      ${g("paper", "#ffffff", "#e4e4e4")}${g("bluePaper", "#ffffff", "#d9ecfc")}${g("gold", "#fbe46a", "#f0a90c")}
      ${g("green", "#3fcf4f", "#12b62a")}${g("coral", "#ff8c70", "#f04e30")}
      <radialGradient id="badgeBlue"><stop offset="0" stop-color="#2f76cf"/><stop offset=".9" stop-color="#0b62ae"/><stop offset="1" stop-color="#0a5ca4"/></radialGradient>
    </defs></svg>`;
  }

  private quickStart() {
    return html`<div class="panel">
      <div class="head">
        <div class="back">&lt;</div>${badge}
        <h1>Automated Scan</h1>
        <div class="brand">${badge}
          <svg class="wordmark" width="190" height="86" viewBox="0 0 190 86">
            <text x="3" y="44" textLength="98" lengthAdjust="spacingAndGlyphs" font-family="Roboto, sans-serif" font-weight="700" font-size="50" fill="#0063b0">ZAP</text>
            <text x="105" y="44" textLength="26" lengthAdjust="spacingAndGlyphs" font-family="Roboto, sans-serif" font-weight="700" font-size="23" fill="#2a6fb3">by</text>
            <text x="0" y="73" textLength="179" lengthAdjust="spacingAndGlyphs" font-family="DejaVu Sans Mono, monospace" font-weight="700" font-size="30" fill="#1b1485">Checkmarx</text>
            <path d="M171 63L180.500 54" stroke="#1b1485" stroke-width="4"/>
          </svg>
        </div>
      </div>
      <div class="intro"><p>This screen allows you to launch an automated scan against  an application - just enter its URL below and press 'Attack'.</p><p>Please be aware that you should only attack applications that you have been specifically been given permission to test.</p></div>
      <div class="form">
        <span>URL to attack:</span>
        <div class="urlrow"><div class="combo url"><span>https://juice-shop.herokuapp.com</span><span class="urldrop">${chevron("down")}</span></div><div class="btn select">${icon("globe")}Select...</div></div>
        <span>Use traditional spider:</span>
        <svg class="check" width="22" height="22" viewBox="0 0 22 22"><rect x="1" y="1" width="20" height="20" rx="3" fill="#fff" stroke="#4f9ee3" stroke-width="1.500"/><path d="M5 11L9 16L16.500 5" fill="none" stroke="#4f9ee3" stroke-width="2.600"/></svg>
        <span>Use ajax spider:</span>
        <div class="ajax"><div class="combo if"><span>If Modern</span>${chevron("down")}</div><span class="with">with</span><div class="combo browser"><span>Chrome</span>${chevron("down")}</div></div>
        <span></span>
        <div class="actions"><div class="btn attack">${icon("bolt")}Attack</div><div class="btn stop"><i class="square"></i>Stop</div></div>
        <span>Progress:</span>
        <span>Attack complete - see the Alerts tab for details of any issues found</span>
      </div>
    </div>`;
  }

  render() {
    return html`${this.gradients()}
    <div class="app">
      <header class="menubar">${icon("zap")}
        <nav class="menus">${menus.map(([m, w]) => html`<span style=${styleMap({ width: `${w}px` })}>${m}</span>`)}</nav>
        <span class="title">Untitled Session - ZAP 2.16.1</span>
        <div class="winbtns">
          <svg width="18" height="18"><path d="M1 9.500H16" stroke="#111" stroke-width="1.300"/></svg>
          <svg width="18" height="18"><g fill="none" stroke="#111" stroke-width="1.400"><rect x="2" y="5" width="11" height="11" rx="2"/><path d="M5 2.500H13Q15.500 2.500 15.500 5V13"/></g></svg>
          <svg width="18" height="18"><path d="M2 2L16 16M16 2L2 16" stroke="#111" stroke-width="1.400"/></svg>
        </div>
      </header>
      <div class="toolbar">
        <div class="combo mode"><span>Standard Mode</span>${chevron("down")}</div>
        <div class="tools">${toolsA.map((t) => this.toolItem(t))}</div>
        <div class="toolsB">${toolsB.map((t) => this.toolItem(t))}</div>
      </div>
      <div class="upper">
        <section class="sites">
          ${this.tabStrip(siteTabs, "sitetabs")}
          <div class="sitesbar">${["target", "winPlus", "winIn", "winOut"].map(icon)}</div>
          <div class="sitetree">
            <div class="siterow">${chevron("right", "#a9a9a9")}${icon("contexts")}Contexts</div>
            <div class="siterow sel">${chevron("right", "#a9a9a9")}${icon("globe")}Sites</div>
          </div>
        </section>
        <div class="split">${chevron("left")}${chevron("right")}<div class="dots v"><i></i><i></i><i></i></div></div>
        <section class="work">
          ${this.tabStrip(workTabs)}
          <div class="workframe">${this.quickStart()}<div class="wscroll"></div></div>
        </section>
      </div>
      <div class="hsplit"><div class="dots"><i></i><i></i><i></i></div></div>
      ${this.tabStrip(infoTabs, "infotabs")}
      <div class="info">
        <section class="alertside">
          <div class="alertbar">${icon("target")}${icon("globeGrey")}<div class="sep"></div>${icon("pencil")}<div class="sep"></div>${icon("broom")}</div>
          <div class="alerttree">
            <div class="rows">
              <div class="row top">${chevron("down", "#a9a9a9")}${icon("folder")}Alerts (16)</div>
              ${alerts.map(([f, t]) => html`<div class="row">${chevron("right", "#a9a9a9")}${icon(f)}${t}</div>`)}
            </div>
            <div class="ascroll"><div class="thumb"></div></div>
          </div>
        </section>
        <div class="vsplit"><div class="dots v"><i></i><i></i><i></i></div></div>
        <section class="details"><p>Full details of any selected alert will be displayed here.</p><p>You can manually add alerts by right clicking on the relevant line in the history and selecting 'Add alert'.</p><p>You can also edit existing alerts by double clicking on them.</p></section>
      </div>
      <footer class="status">
        <span class="alabel">Alerts</span>
        ${alertCounts.map(([f, n]) => html`<span class="count">${icon(f)}${n}</span>`)}
        <div class="sep"></div><span>Main Proxy: localhost:8080</span>
        <span class="now">Current Status</span>
        ${scanCounts.map((n, i) => html`<span class=${classMap({ count: true, last: i === scanCounts.length - 1 })}>${icon(n)}0</span>`)}
      </footer>
    </div>`;
  }
}
